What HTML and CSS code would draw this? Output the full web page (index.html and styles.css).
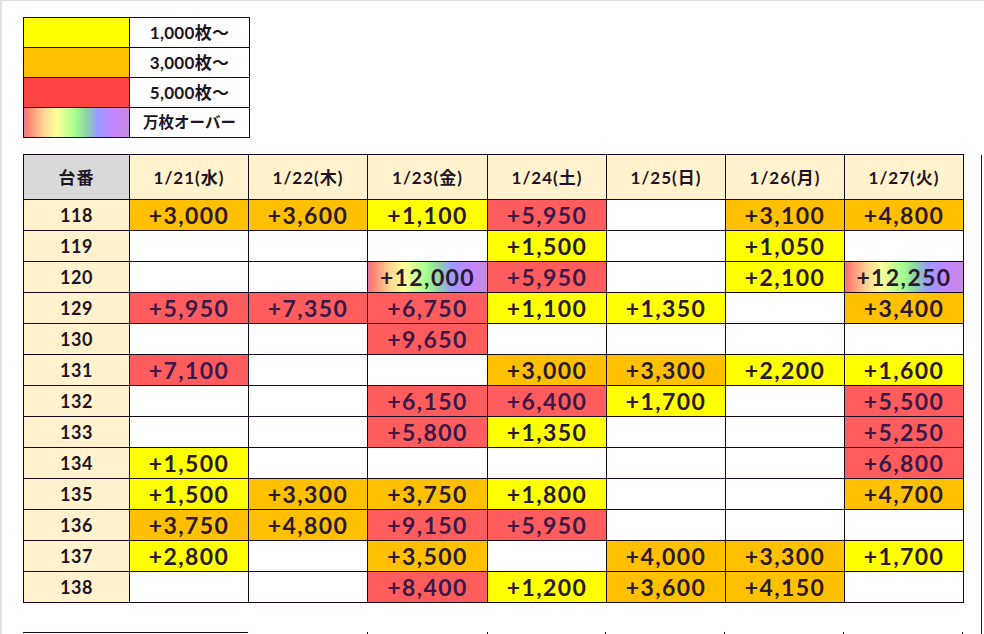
FILE: index.html
```html
<!DOCTYPE html>
<html lang="ja">
<head>
<meta charset="utf-8">
<link rel="stylesheet" href="styles.css">
</head>
<body>
<div class="page">
  <table class="legend">
    <colgroup><col class="lc1"><col class="lc2"></colgroup>
    <tr><td class="y"></td><td class="lt">1,000枚〜</td></tr>
    <tr><td class="o"></td><td class="lt">3,000枚〜</td></tr>
    <tr><td class="r lr"></td><td class="lt">5,000枚〜</td></tr>
    <tr><td class="rb"></td><td class="lt lt-jp">万枚オーバー</td></tr>
  </table>

  <div class="main-row">
    <table class="grid">
      <colgroup><col class="c0"><col class="cw"><col class="cw"><col class="cx"><col class="cw"><col class="cw"><col class="cw"><col class="cw"></colgroup>
      <thead>
        <tr>
          <th class="gray">台番</th><th>1/21(水)</th><th>1/22(木)</th><th>1/23(金)</th><th>1/24(土)</th><th>1/25(日)</th><th>1/26(月)</th><th>1/27(火)</th>
        </tr>
      </thead>
      <tbody>
        <tr><th>118</th><td class="o">+3,000</td><td class="o">+3,600</td><td class="y">+1,100</td><td class="r">+5,950</td><td></td><td class="o">+3,100</td><td class="o">+4,800</td></tr>
        <tr><th>119</th><td></td><td></td><td></td><td class="y">+1,500</td><td></td><td class="y">+1,050</td><td></td></tr>
        <tr><th>120</th><td></td><td></td><td class="rb">+12,000</td><td class="r">+5,950</td><td></td><td class="y">+2,100</td><td class="rb">+12,250</td></tr>
        <tr><th>129</th><td class="r">+5,950</td><td class="r">+7,350</td><td class="r">+6,750</td><td class="y">+1,100</td><td class="y">+1,350</td><td></td><td class="o">+3,400</td></tr>
        <tr><th>130</th><td></td><td></td><td class="r">+9,650</td><td></td><td></td><td></td><td></td></tr>
        <tr><th>131</th><td class="r">+7,100</td><td></td><td></td><td class="o">+3,000</td><td class="o">+3,300</td><td class="y">+2,200</td><td class="y">+1,600</td></tr>
        <tr><th>132</th><td></td><td></td><td class="r">+6,150</td><td class="r">+6,400</td><td class="y">+1,700</td><td></td><td class="r">+5,500</td></tr>
        <tr><th>133</th><td></td><td></td><td class="r">+5,800</td><td class="y">+1,350</td><td></td><td></td><td class="r">+5,250</td></tr>
        <tr><th>134</th><td class="y">+1,500</td><td></td><td></td><td></td><td></td><td></td><td class="r">+6,800</td></tr>
        <tr><th>135</th><td class="y">+1,500</td><td class="o">+3,300</td><td class="o">+3,750</td><td class="y">+1,800</td><td></td><td></td><td class="o">+4,700</td></tr>
        <tr><th>136</th><td class="o">+3,750</td><td class="o">+4,800</td><td class="r">+9,150</td><td class="r">+5,950</td><td></td><td></td><td></td></tr>
        <tr><th>137</th><td class="y">+2,800</td><td></td><td class="o">+3,500</td><td></td><td class="o">+4,000</td><td class="o">+3,300</td><td class="y">+1,700</td></tr>
        <tr><th>138</th><td></td><td></td><td class="r">+8,400</td><td class="y">+1,200</td><td class="o">+3,600</td><td class="o">+4,150</td><td></td></tr>
      </tbody>
    </table>
    <div class="edge"></div>
  </div>

  <div class="next">
    <div class="next-first"></div>
    <div class="tick t1"></div>
    <div class="tick t2"></div>
    <div class="tick t3"></div>
    <div class="tick t4"></div>
    <div class="tick t5"></div>
    <div class="tick t6"></div>
  </div>
</div>
</body>
</html>
```

FILE: styles.css
```css
html, body {
  margin: 0;
  padding: 0;
  background: #ffffff;
}
body {
  width: 984px;
  height: 634px;
  overflow: hidden;
  border-top: 1px solid #e2e2e2;
  border-left: 2px solid #e2e2e2;
  box-sizing: border-box;
  font-family: "Lato", "Noto Sans CJK JP", sans-serif;
  color: #2a1a30;
}
.page {
  padding: 16px 0 0 21px;
}

/* legend */
.legend {
  border-collapse: collapse;
  table-layout: fixed;
  width: 226px;
}
.lc1 { width: 106px; }
.lc2 { width: 120px; }
.legend tr { height: 30px; }
.legend td {
  border: 1px solid #150a20;
  padding: 0;
  line-height: 1;
}
.legend .lt {
  text-align: center;
  font-family: "Lato", "Noto Sans CJK JP", sans-serif;
  font-weight: 700;
  font-size: 17px;
  letter-spacing: 0.3px;
  color: #1e1424;
}
.legend .lt-jp {
  font-size: 15.5px;
  letter-spacing: 0;
}
.legend .lr { background: #ff4444; }

/* main grid */
.main-row {
  display: flex;
  align-items: flex-start;
  margin-top: 16px;
}
.grid {
  border-collapse: collapse;
  table-layout: fixed;
  width: 941px;
}
.c0 { width: 106px; }
.cw { width: 119px; }
.cx { width: 120px; }
.grid th, .grid td {
  border: 1px solid #150a20;
  padding: 0;
  text-align: center;
  line-height: 1;
}
.grid thead tr { height: 45px; }
.grid tbody tr { height: 31px; }
.grid thead th {
  background: #fff2cc;
  font-family: "Lato", "Noto Sans CJK JP", sans-serif;
  font-weight: 700;
  font-size: 17px;
  letter-spacing: 1px;
  color: #1e1424;
}
.grid thead th.gray {
  background: #d9d9d9;
}
.grid tbody th {
  background: #fff2cc;
  font-family: "Lato", sans-serif;
  font-weight: 700;
  font-size: 18px;
  letter-spacing: 0.6px;
  color: #1e1424;
}
.grid tbody td {
  font-family: "Lato", sans-serif;
  font-weight: 700;
  font-size: 23px;
  letter-spacing: 1.4px;
  color: #2a1a30;
}
.y { background: #ffff00; }
.o { background: #ffc000; }
.r { background: #ff5d5d; }
.grid td.r { color: #3a1848; }
.rb {
  background: linear-gradient(90deg, #ff6e6e 0%, #ffd590 18%, #ffff99 30%, #a8ff90 48%, #8fd8a0 58%, #9a9aff 70%, #c784ff 86%, #c48ad8 100%);
}

.edge {
  width: 0;
  margin-left: 17px;
  border-left: 1px solid #2a1a30;
  height: 520px;
  margin-top: 1px;
}

/* next table (cut off) */
.next {
  position: relative;
  margin-top: -43px;
  height: 4px;
}
.next-first {
  width: 225px;
  border-top: 1px solid #150a20;
}
.tick {
  position: absolute;
  top: 0;
  width: 1px;
  height: 4px;
  background: #150a20;
}
.t1 { left: 344px; }
.t2 { left: 464px; }
.t3 { left: 582px; }
.t4 { left: 701px; }
.t5 { left: 820px; }
.t6 { left: 939px; }
```
